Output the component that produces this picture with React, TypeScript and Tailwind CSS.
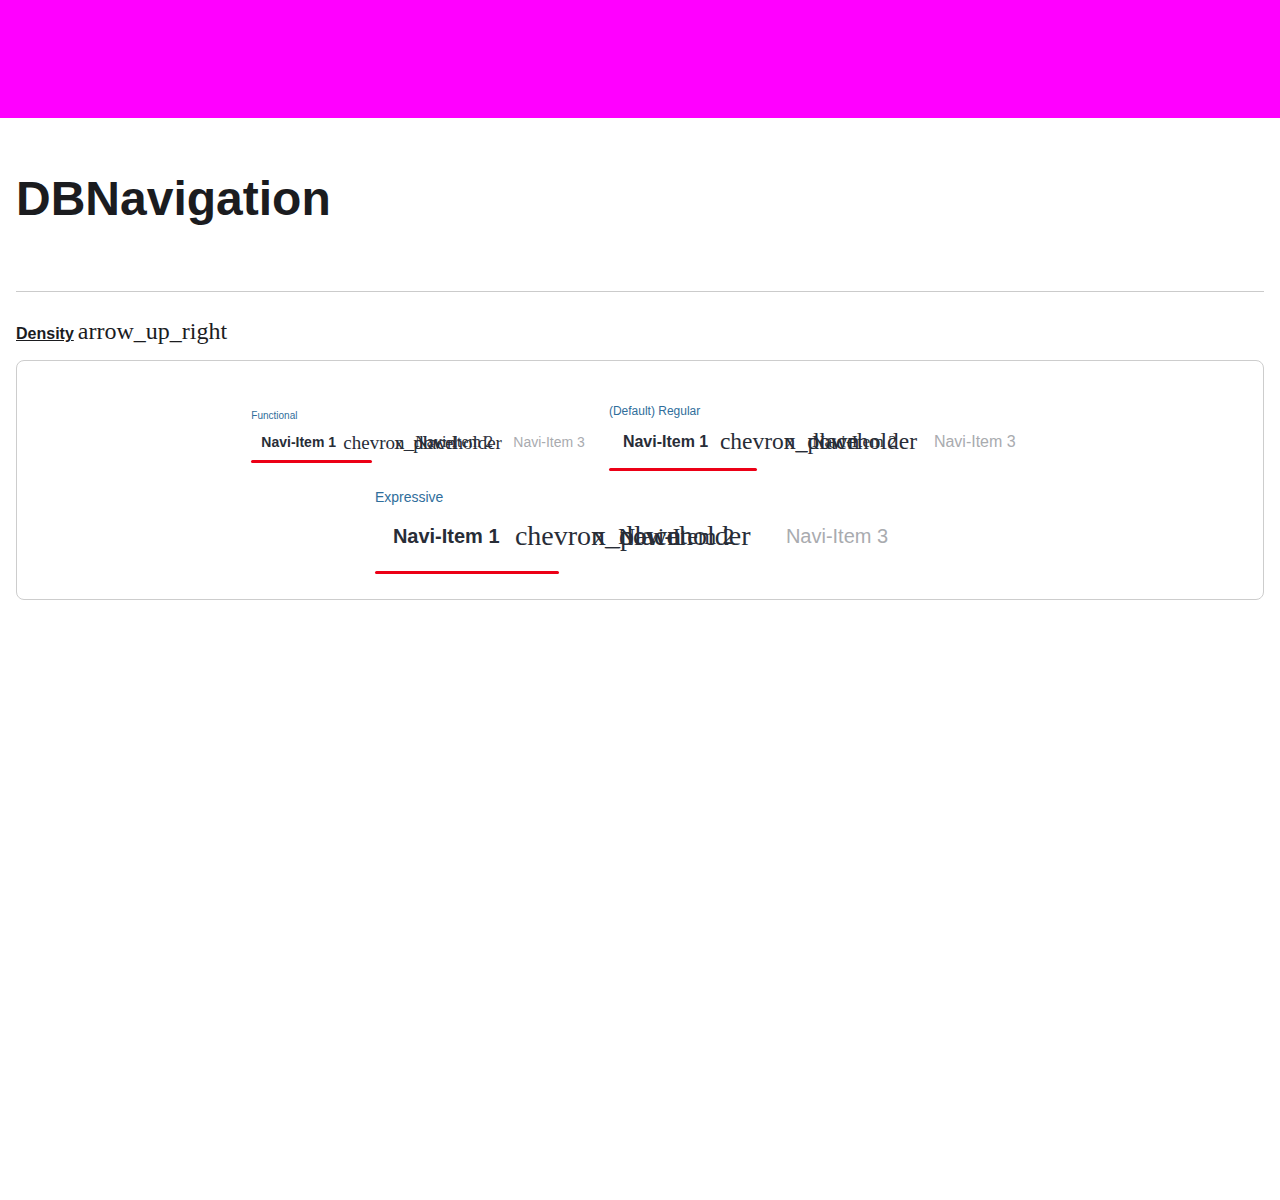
const sans = "font-['Liberation_Sans',Arial,sans-serif]";
const serif = "font-['Liberation_Serif','Times_New_Roman',serif]";

type Density = {
  label: string;
  labelClass: string;
  blockClass: string;
  navClass: string;
  itemClass: string;
  item1Class: string;
  underlineClass: string;
  item2Class: string;
  iconClass: string;
  placeholderClass: string;
  item2TextClass: string;
  item3Class: string;
};

const functional: Density = {
  label: 'Functional',
  labelClass: 'text-[10px] leading-[14px]',
  blockClass: 'pt-[9px]',
  navClass: 'h-[41px]',
  itemClass: 'h-[38px]',
  item1Class: 'w-[92px] pl-[10px] text-[14px]',
  underlineClass: 'top-[37px] w-[121px]',
  item2Class: 'w-[170px]',
  iconClass: 'text-[19px]',
  placeholderClass: 'left-[51px] text-[19px]',
  item2TextClass: 'left-[72px] text-[16px]',
  item3Class: 'pr-[10px] text-[14px]',
};

const regular: Density = {
  label: '(Default) Regular',
  labelClass: 'text-[12px] leading-[16px]',
  blockClass: 'pt-[3px]',
  navClass: 'h-[52px]',
  itemClass: 'h-[46px]',
  item1Class: 'w-[111px] pl-[14px] text-[16px]',
  underlineClass: 'top-[49px] w-[148px]',
  item2Class: 'w-[214px]',
  iconClass: 'text-[23.5px]',
  placeholderClass: 'left-[64px] text-[23.5px]',
  item2TextClass: 'left-[92px] text-[17.5px]',
  item3Class: 'pr-[14px] text-[16px]',
};

const expressive: Density = {
  label: 'Expressive',
  labelClass: 'text-[14px] leading-[18px]',
  blockClass: '',
  navClass: 'h-[68px]',
  itemClass: 'h-[60px]',
  item1Class: 'w-[140px] pl-[18px] text-[20px]',
  underlineClass: 'top-[65px] w-[184px]',
  item2Class: 'w-[271px]',
  iconClass: 'text-[28px]',
  placeholderClass: 'left-[77px] text-[28px]',
  item2TextClass: 'left-[103px] text-[24px]',
  item3Class: 'pr-[18px] text-[20px]',
};

function NavigationExample({ d }: { d: Density }) {
  return (
    <div className={`flex flex-col ${d.blockClass}`}>
      <span className={`text-[#2f6e9b] ${d.labelClass}`}>{d.label}</span>
      <ul className={`flex items-start ${d.navClass}`}>
        {/* active item */}
        <li className={`relative flex items-center font-bold text-[#282d37] ${d.itemClass} ${d.item1Class}`}>
          Navi-Item 1
          <span className={`absolute left-0 h-[3px] rounded-full bg-[#ec0016] ${d.underlineClass}`} />
        </li>
        {/* item with sub navigation, icon font missing */}
        <li className={`relative text-[#282d37] ${d.itemClass} ${d.item2Class}`}>
          <span className={`absolute left-0 top-1/2 -translate-y-1/2 leading-none whitespace-nowrap ${serif} ${d.iconClass}`}>
            chevron_down
          </span>
          <span className={`absolute top-1/2 -translate-y-1/2 leading-none whitespace-nowrap ${serif} ${d.placeholderClass}`}>
            x_placeholder
          </span>
          <span className={`absolute top-1/2 -translate-y-1/2 leading-none whitespace-nowrap ${serif} ${d.item2TextClass}`}>
            Navi-Item 2
          </span>
        </li>
        {/* disabled item */}
        <li className={`flex items-center whitespace-nowrap text-[#a9abaf] ${d.itemClass} ${d.item3Class}`}>
          Navi-Item 3
        </li>
      </ul>
    </div>
  );
}

export default function App() {
  return (
    <div className={`min-h-[1200px] bg-white text-[#282d37] ${sans}`}>
      <header className="h-[118px] bg-[#ff00ff]" />
      <main className="px-4">
        <h1 className="mt-[57px] text-5xl font-bold leading-none text-[#1b1c1f]">DBNavigation</h1>
        <hr className="mt-[68px] border-[#cbcbcb]" />

        <div className="mt-[25px] flex items-baseline leading-[28px]">
          <a href="#" className="text-[16px] font-bold text-[#1b1c1f] underline">
            Density
          </a>
          <span className={`ml-[4px] text-[24px] text-[#1b1c1f] ${serif}`}>arrow_up_right</span>
        </div>

        <div className="mt-[12px] flex flex-col items-center gap-[17px] rounded-lg border border-[#cdcdcd] pl-[1px] pt-[39px] pb-[25px]">
          <div className="flex items-start gap-[14px]">
            <NavigationExample d={functional} />
            <NavigationExample d={regular} />
          </div>
          <NavigationExample d={expressive} />
        </div>
      </main>
    </div>
  );
}
